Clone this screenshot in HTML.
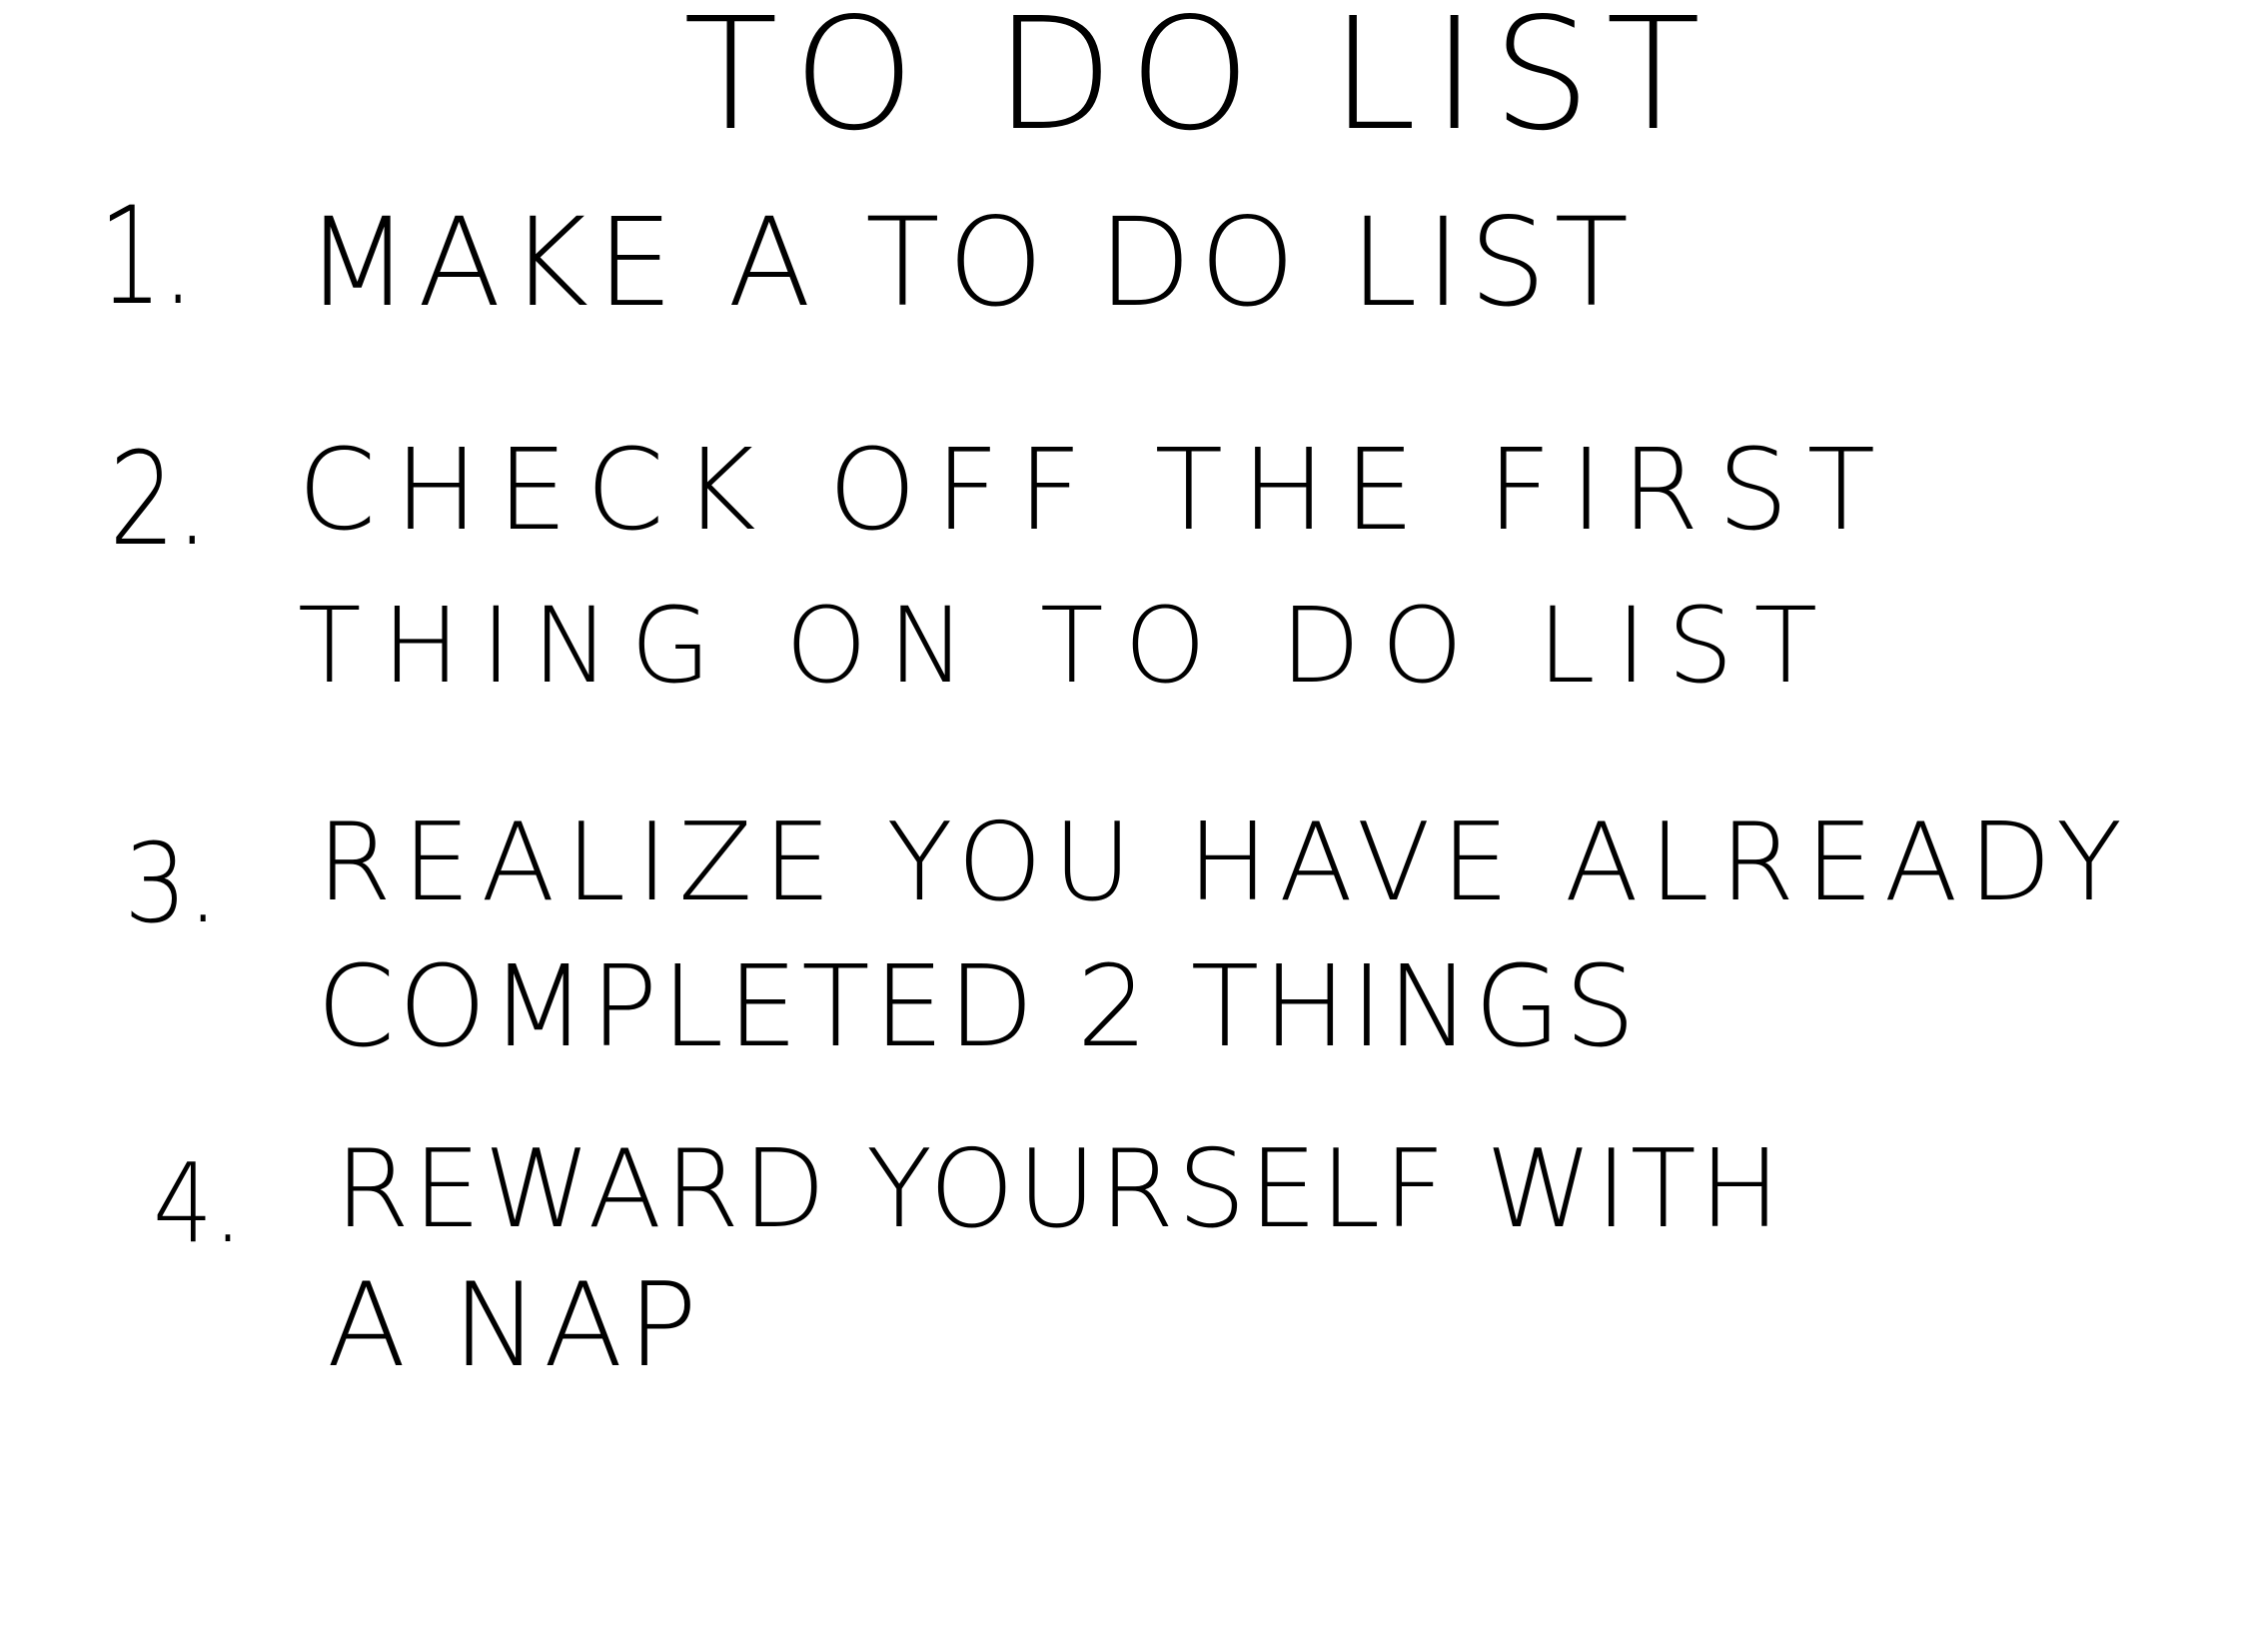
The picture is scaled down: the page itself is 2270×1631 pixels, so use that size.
<!DOCTYPE html>
<html><head><meta charset="utf-8"><style>
html,body{margin:0;padding:0;background:#fff;width:2270px;height:1631px;overflow:hidden}
svg{display:block}
text{font-family:"DejaVu Sans","Liberation Sans",sans-serif;font-weight:200;fill:#000}
</style></head><body>
<svg width="2270" height="1631" viewBox="0 0 2270 1631" xmlns="http://www.w3.org/2000/svg">
<text x="684" y="128" font-size="155" textLength="1018" lengthAdjust="spacing">TO DO LIST</text>
<text x="99" y="303" font-size="135" textLength="95" lengthAdjust="spacingAndGlyphs">1.</text>
<text x="305" y="305" font-size="122" textLength="1325" lengthAdjust="spacing">MAKE A TO DO LIST</text>
<text x="109" y="544" font-size="128" textLength="100" lengthAdjust="spacingAndGlyphs">2.</text>
<text x="298" y="529" font-size="112" textLength="1579" lengthAdjust="spacing">CHECK OFF THE FIRST</text>
<text x="298" y="682" font-size="104" textLength="1521" lengthAdjust="spacing">THING ON TO DO LIST</text>
<text x="124" y="922" font-size="110" textLength="95" lengthAdjust="spacingAndGlyphs">3.</text>
<text x="317" y="900" font-size="108" textLength="1807" lengthAdjust="spacing">REALIZE YOU HAVE ALREADY</text>
<text x="317" y="1046" font-size="112" textLength="1320" lengthAdjust="spacing">COMPLETED 2 THINGS</text>
<text x="153" y="1242" font-size="110" textLength="90" lengthAdjust="spacingAndGlyphs">4.</text>
<text x="335" y="1227" font-size="108" textLength="1447" lengthAdjust="spacing">REWARD YOURSELF WITH</text>
<text x="327" y="1366" font-size="116" textLength="371" lengthAdjust="spacing">A NAP</text>
</svg>
</body></html>
